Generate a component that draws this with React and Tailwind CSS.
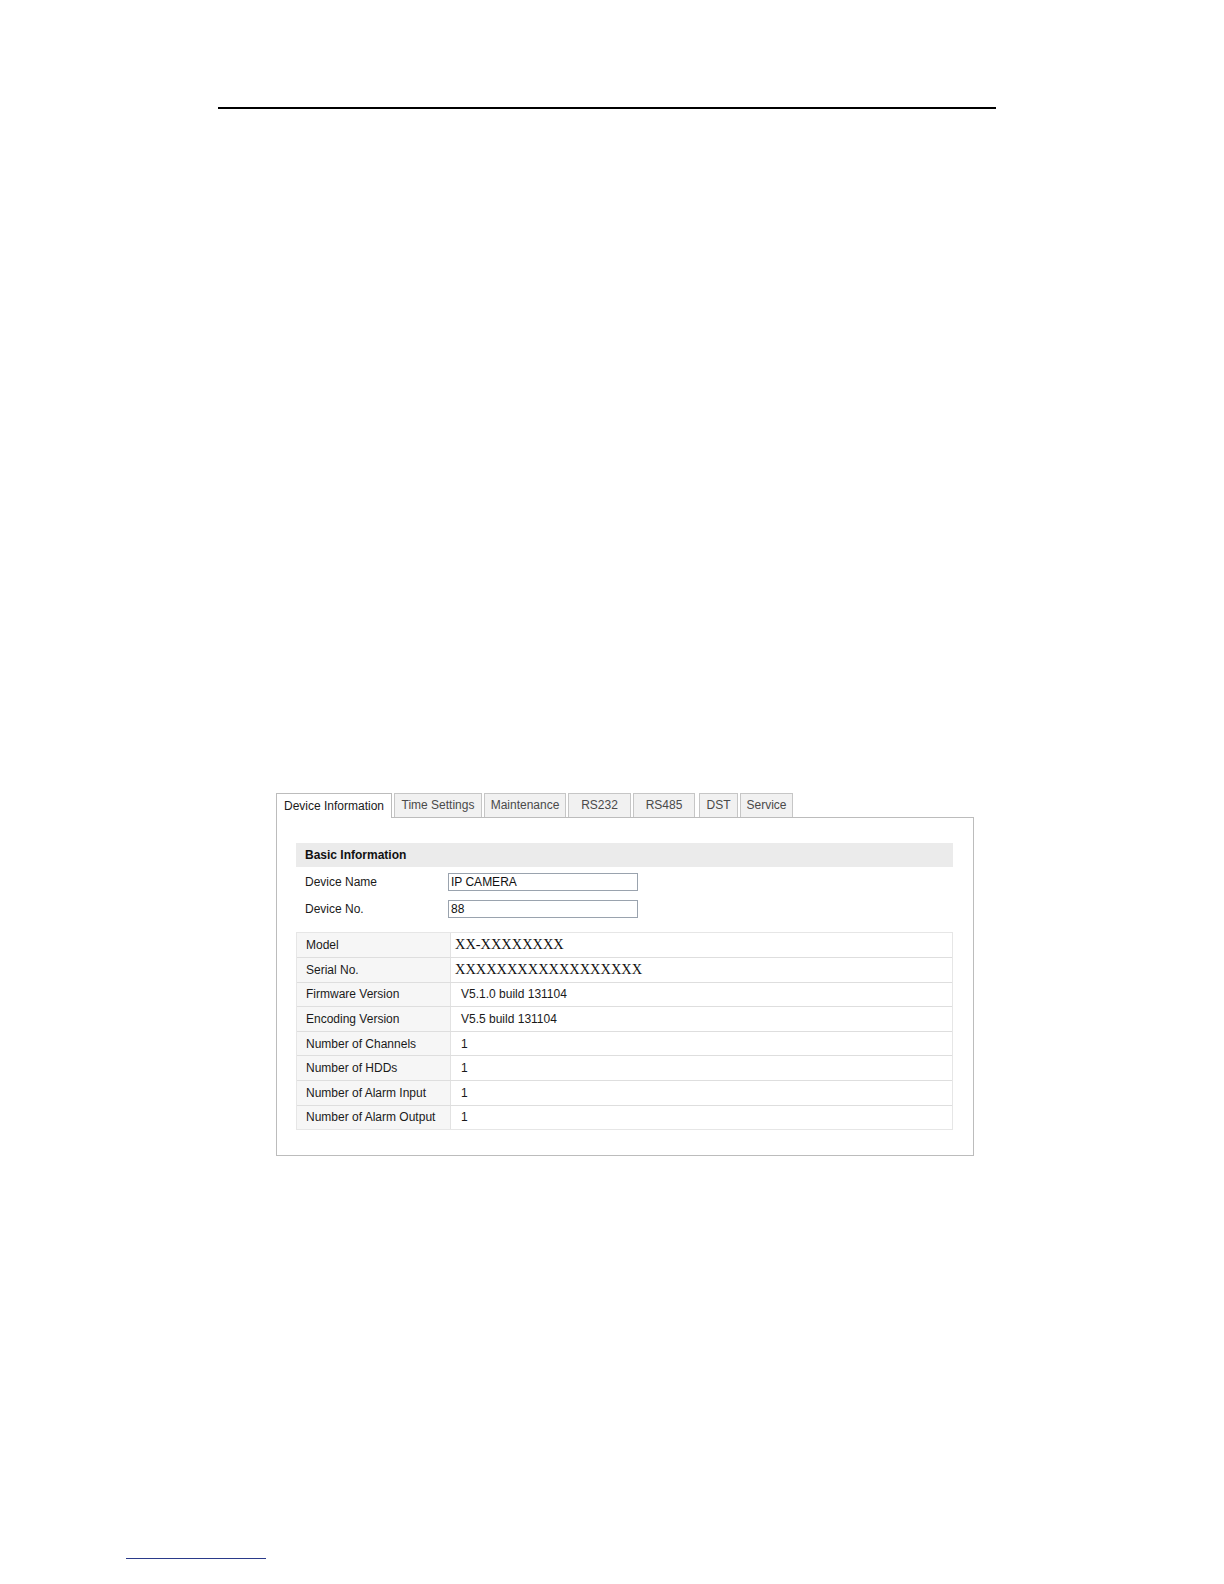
export default function App() {
  const tabs = [
    { label: "Device Information", w: "w-[116px]", active: true, ml: "" },
    { label: "Time Settings", w: "w-[88px]", ml: "ml-[2px]" },
    { label: "Maintenance", w: "w-[82px]", ml: "ml-[2px]" },
    { label: "RS232", w: "w-[63px]", ml: "ml-[2px]" },
    { label: "RS485", w: "w-[62px]", ml: "ml-[2px]" },
    { label: "DST", w: "w-[39px]", ml: "ml-[4px]" },
    { label: "Service", w: "w-[53px]", ml: "ml-[2px]" },
  ];
  const rows = [
    ["Model", "XX-XXXXXXXX", true],
    ["Serial No.", "XXXXXXXXXXXXXXXXXX", true],
    ["Firmware Version", "V5.1.0 build 131104"],
    ["Encoding Version", "V5.5 build 131104"],
    ["Number of Channels", "1"],
    ["Number of HDDs", "1"],
    ["Number of Alarm Input", "1"],
    ["Number of Alarm Output", "1"],
  ];
  return (
    <div className="w-[1224px] h-[1584px] bg-white overflow-hidden font-['Liberation_Sans',Arial,sans-serif] text-[12px] text-[#1a1a1a]">
      <div className="pt-[107px] pl-[218px]">
        <div className="w-[778px] h-[1.5px] bg-black" />
      </div>

      <div className="mt-[684px] ml-[276px] w-[698px]">
        <div className="flex items-end h-[24px] relative z-10">
          {tabs.map((t) => (
            <div
              key={t.label}
              className={
                t.active
                  ? `${t.w} ${t.ml} h-[25px] -mb-px bg-white border border-b-0 border-[#bcbcbc] flex items-center justify-center text-[#1a1a1a]`
                  : `${t.w} ${t.ml} h-[24px] bg-[#f1f1f1] border border-b-0 border-[#c6c6c6] flex items-center justify-center text-[#4a4a4a]`
              }
            >
              {t.label}
            </div>
          ))}
        </div>
        <div className="h-[339px] border border-[#bcbcbc] pl-[19px] pt-[25px]">
          <div className="w-[657px] h-[24px] bg-[#ebebeb] flex items-center pl-[9px] font-bold text-[#111]">
            Basic Information
          </div>
          <div className="mt-[6px] flex items-center h-[18px]">
            <div className="w-[152px] pl-[9px]">Device Name</div>
            <div className="w-[190px] h-[18px] border border-[#9aa3ae] flex items-center pl-[2px] text-[#111]">
              IP CAMERA
            </div>
          </div>
          <div className="mt-[9px] flex items-center h-[18px]">
            <div className="w-[152px] pl-[9px]">Device No.</div>
            <div className="w-[190px] h-[18px] border border-[#9aa3ae] flex items-center pl-[2px] text-[#111]">
              88
            </div>
          </div>
          <div className="mt-[14px] w-[657px] border border-[#e6e6e6]">
            {rows.map(([k, v, serif], i) => (
              <div
                key={k}
                className={`flex h-[24.6px] ${i > 0 ? "border-t border-[#dedede]" : ""}`}
              >
                <div className="w-[154px] bg-[#f6f6f6] border-r border-[#e2e2e2] flex items-center pl-[9px] text-[#1a1a1a]">
                  {k}
                </div>
                <div
                  className={
                    serif
                      ? "flex-1 flex items-center pl-[4px] font-['Liberation_Serif','Times_New_Roman',serif] text-[14.4px] text-[#111]"
                      : "flex-1 flex items-center pl-[10px] text-[#1a1a1a]"
                  }
                >
                  {v}
                </div>
              </div>
            ))}
          </div>
        </div>
      </div>

      <div className="mt-[402px] ml-[126px] w-[140px] h-px bg-[#2a3a8a]" />
    </div>
  );
}
